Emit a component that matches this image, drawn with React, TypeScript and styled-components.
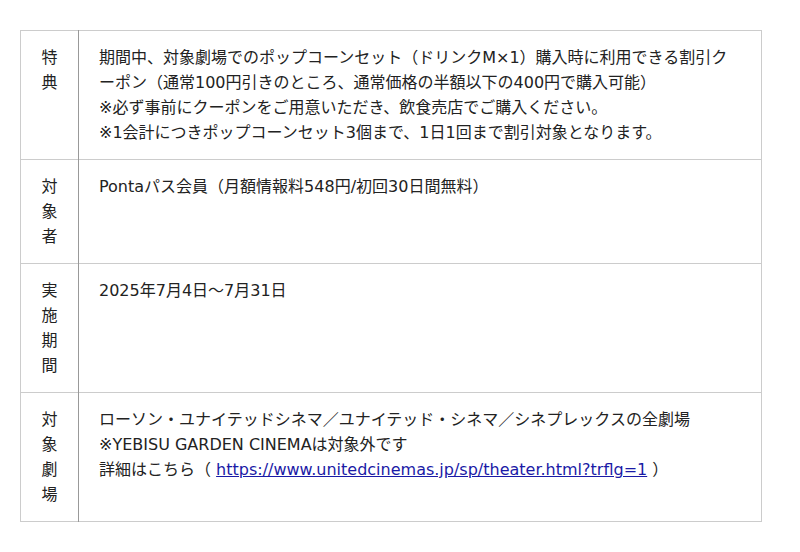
import React from 'react';
import styled, { createGlobalStyle } from 'styled-components';

const GlobalStyle = createGlobalStyle`
  body {
    margin: 0;
    background: #ffffff;
    color: #222222;
    font-family: "DejaVu Sans", "Noto Sans CJK JP", sans-serif;
  }
`;

const Page = styled.div`
  padding: 30px 20px;
`;

const Table = styled.table`
  width: 742px;
  border-collapse: collapse;
  font-size: 16px;
  line-height: 25px;
`;

const Row = styled.tr`
  border-top: 1px solid #cccccc;
  border-bottom: 1px solid #cccccc;
`;

const Label = styled.th`
  width: 17px;
  padding: 14px 20px 14px 20px;
  border-left: 1px solid #cccccc;
  border-right: 1px solid #999999;
  font-weight: normal;
  text-align: center;
  vertical-align: top;
  word-break: break-all;
`;

const Body = styled.td`
  padding: 14px 20px;
  border-right: 1px solid #cccccc;
  vertical-align: top;
`;

const Line = styled.div``;

const Link = styled.a`
  color: #1a1aa6;
  text-decoration: underline;
`;

interface Item {
  label: string;
  lines: React.ReactNode[];
}

const items: Item[] = [
  {
    label: '特典',
    lines: [
      '期間中、対象劇場でのポップコーンセット（ドリンクM×1）購入時に利用できる割引クーポン（通常100円引きのところ、通常価格の半額以下の400円で購入可能）',
      '※必ず事前にクーポンをご用意いただき、飲食売店でご購入ください。',
      '※1会計につきポップコーンセット3個まで、1日1回まで割引対象となります。',
    ],
  },
  {
    label: '対象者',
    lines: ['Pontaパス会員（月額情報料548円/初回30日間無料）'],
  },
  {
    label: '実施期間',
    lines: ['2025年7月4日～7月31日'],
  },
  {
    label: '対象劇場',
    lines: [
      'ローソン・ユナイテッドシネマ／ユナイテッド・シネマ／シネプレックスの全劇場',
      '※YEBISU GARDEN CINEMAは対象外です',
      <>
        詳細はこちら（ <Link href="#">https://www.unitedcinemas.jp/sp/theater.html?trflg=1</Link> ）
      </>,
    ],
  },
];

export default function App() {
  return (
    <Page>
      <GlobalStyle />
      <Table>
        <tbody>
          {items.map((item) => (
            <Row key={item.label}>
              <Label>{item.label}</Label>
              <Body>
                {item.lines.map((line, i) => (
                  <Line key={i}>{line}</Line>
                ))}
              </Body>
            </Row>
          ))}
        </tbody>
      </Table>
    </Page>
  );
}
